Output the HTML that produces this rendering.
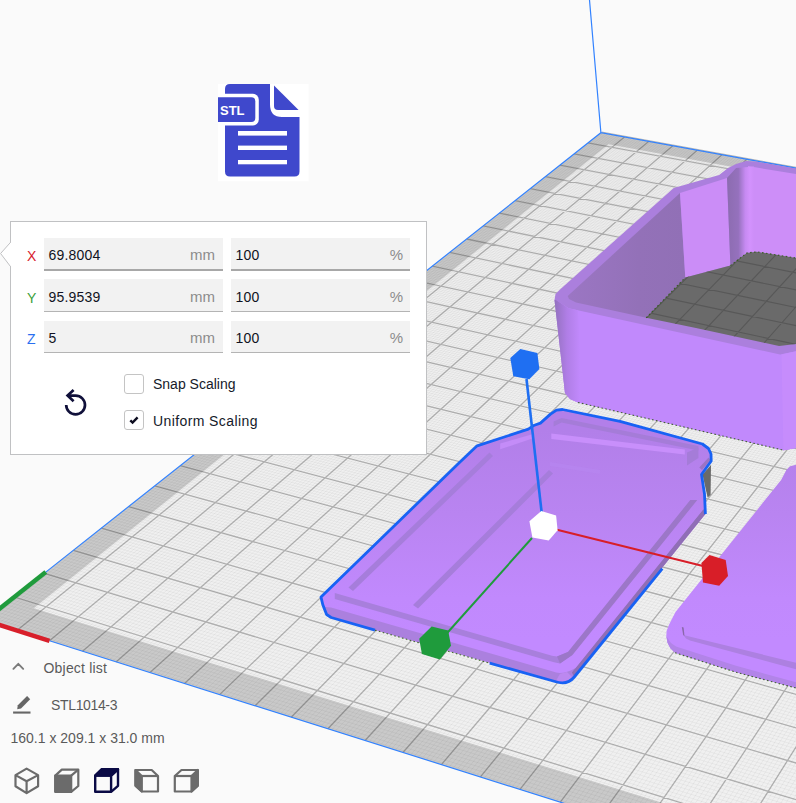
<!DOCTYPE html>
<html><head><meta charset="utf-8"><style>
html,body{margin:0;padding:0;}
body{width:796px;height:803px;overflow:hidden;background:#fafafa;position:relative;font-family:"Liberation Sans",sans-serif;}
.abs{position:absolute;}
svg.scene{position:absolute;left:0;top:0;}
.panel{position:absolute;left:10px;top:221px;width:415px;height:232px;background:#fff;border:1px solid #c0c1c3;}
.fld{position:absolute;width:179px;height:31px;background:#f2f2f2;border-bottom:1px solid #b4b4b4;}
.fld.act{height:31px;border-bottom:2px solid #a8a8a8;}
.val{position:absolute;left:4.5px;top:7px;font-size:14px;color:#101322;line-height:18px;letter-spacing:0.2px;}
.unit{position:absolute;right:8px;top:7px;font-size:15px;color:#8c8c8c;line-height:18px;}
.lab{position:absolute;font-size:14px;line-height:18px;}
.txt{position:absolute;font-size:14px;line-height:18px;white-space:nowrap;}
</style></head><body>
<svg class="scene" width="796" height="803" viewBox="0 0 796 803">
<polygon points="-15.2,620.4 1200.8,1004.5 1424.9,282.4 600.9,132.7" fill="#f0f0f0"/>
<path d="M-15.2,620.4 1200.8,1004.5 1424.9,282.4 600.9,132.7Z M33.9,608.2 1172.4,960.7 1397.1,289.1 608.6,144.3Z" fill="#000" fill-opacity="0.16" fill-rule="evenodd"/>
<path d="M-12.0,621.4L603.2,133.1M-8.8,622.4L605.6,133.6M-5.6,623.4L608.0,134.0M-2.4,624.5L610.4,134.4M0.8,625.5L612.7,134.9M4.0,626.5L615.1,135.3M7.2,627.5L617.5,135.7M10.5,628.5L619.9,136.2M13.7,629.5L622.2,136.6M20.1,631.6L627.0,137.5M23.4,632.6L629.4,137.9M26.6,633.6L631.8,138.3M29.9,634.6L634.2,138.8M33.1,635.7L636.6,139.2M36.4,636.7L639.0,139.6M39.7,637.7L641.4,140.1M42.9,638.8L643.8,140.5M46.2,639.8L646.2,140.9M52.7,641.9L651.0,141.8M56.0,642.9L653.4,142.2M59.3,643.9L655.8,142.7M62.6,645.0L658.3,143.1M65.9,646.0L660.7,143.6M69.2,647.1L663.1,144.0M72.5,648.1L665.5,144.4M75.9,649.2L667.9,144.9M79.2,650.2L670.4,145.3M85.8,652.3L675.2,146.2M89.2,653.4L677.7,146.7M92.5,654.4L680.1,147.1M95.8,655.5L682.5,147.5M99.2,656.5L685.0,148.0M102.5,657.6L687.4,148.4M105.9,658.7L689.9,148.9M109.3,659.7L692.3,149.3M112.6,660.8L694.8,149.8M119.4,662.9L699.7,150.7M122.8,664.0L702.1,151.1M126.2,665.1L704.6,151.5M129.6,666.1L707.1,152.0M133.0,667.2L709.5,152.4M136.4,668.3L712.0,152.9M139.8,669.4L714.5,153.3M143.2,670.4L716.9,153.8M146.6,671.5L719.4,154.2M153.5,673.7L724.4,155.1M156.9,674.8L726.8,155.6M160.3,675.8L729.3,156.0M163.8,676.9L731.8,156.5M167.2,678.0L734.3,156.9M170.7,679.1L736.8,157.4M174.1,680.2L739.3,157.8M177.6,681.3L741.8,158.3M181.1,682.4L744.3,158.8M188.0,684.6L749.3,159.7M191.5,685.7L751.8,160.1M195.0,686.8L754.3,160.6M198.5,687.9L756.8,161.0M202.0,689.0L759.3,161.5M205.5,690.1L761.8,161.9M209.0,691.2L764.3,162.4M212.5,692.3L766.9,162.9M216.0,693.4L769.4,163.3M223.1,695.7L774.4,164.2M226.6,696.8L777.0,164.7M230.2,697.9L779.5,165.2M233.7,699.0L782.0,165.6M237.3,700.2L784.6,166.1M240.9,701.3L787.1,166.5M244.4,702.4L789.7,167.0M248.0,703.5L792.2,167.5M251.6,704.7L794.7,167.9M258.7,706.9L799.8,168.8M262.3,708.1L802.4,169.3M265.9,709.2L805.0,169.8M269.5,710.3L807.5,170.2M273.1,711.5L810.1,170.7M276.7,712.6L812.6,171.2M280.4,713.8L815.2,171.6M284.0,714.9L817.8,172.1M287.6,716.0L820.3,172.6M294.9,718.3L825.5,173.5M298.5,719.5L828.1,174.0M302.2,720.7L830.7,174.4M305.8,721.8L833.2,174.9M309.5,723.0L835.8,175.4M313.2,724.1L838.4,175.9M316.9,725.3L841.0,176.3M320.5,726.4L843.6,176.8M324.2,727.6L846.2,177.3M331.6,729.9L851.4,178.2M335.3,731.1L854.0,178.7M339.0,732.3L856.6,179.2M342.7,733.5L859.2,179.6M346.5,734.6L861.8,180.1M350.2,735.8L864.4,180.6M353.9,737.0L867.1,181.1M357.6,738.2L869.7,181.5M361.4,739.3L872.3,182.0M368.9,741.7L877.5,183.0M372.7,742.9L880.2,183.4M376.4,744.1L882.8,183.9M380.2,745.3L885.4,184.4M384.0,746.5L888.1,184.9M387.8,747.7L890.7,185.4M391.5,748.9L893.4,185.8M395.3,750.1L896.0,186.3M399.1,751.3L898.6,186.8M406.8,753.7L904.0,187.8M410.6,754.9L906.6,188.2M414.4,756.1L909.3,188.7M418.2,757.3L911.9,189.2M422.1,758.5L914.6,189.7M425.9,759.7L917.3,190.2M429.8,760.9L919.9,190.7M433.6,762.2L922.6,191.1M437.5,763.4L925.3,191.6M445.2,765.8L930.6,192.6M449.1,767.1L933.3,193.1M453.0,768.3L936.0,193.6M456.9,769.5L938.7,194.1M460.8,770.7L941.4,194.6M464.7,772.0L944.1,195.0M468.6,773.2L946.8,195.5M472.5,774.4L949.5,196.0M476.4,775.7L952.2,196.5M484.3,778.2L957.6,197.5M488.2,779.4L960.3,198.0M492.2,780.7L963.0,198.5M496.1,781.9L965.7,199.0M500.1,783.2L968.4,199.5M504.1,784.4L971.1,200.0M508.0,785.7L973.9,200.5M512.0,786.9L976.6,201.0M516.0,788.2L979.3,201.4M524.0,790.7L984.8,202.4M528.0,792.0L987.5,202.9M532.0,793.2L990.2,203.4M536.0,794.5L993.0,203.9M540.1,795.8L995.7,204.4M544.1,797.1L998.5,204.9M548.1,798.3L1001.2,205.4M552.2,799.6L1004.0,205.9M556.2,800.9L1006.7,206.4M564.3,803.4L1012.2,207.4M568.4,804.7L1015.0,207.9M572.5,806.0L1017.8,208.4M576.6,807.3L1020.5,208.9M580.6,808.6L1023.3,209.4M584.7,809.9L1026.1,209.9M588.8,811.2L1028.9,210.5M593.0,812.5L1031.6,211.0M597.1,813.8L1034.4,211.5M605.3,816.4L1040.0,212.5M609.5,817.7L1042.8,213.0M613.6,819.0L1045.6,213.5M617.8,820.3L1048.4,214.0M621.9,821.6L1051.2,214.5M626.1,822.9L1054.0,215.0M630.2,824.3L1056.8,215.5M634.4,825.6L1059.6,216.0M638.6,826.9L1062.4,216.5M647.0,829.6L1068.0,217.6M651.2,830.9L1070.9,218.1M655.4,832.2L1073.7,218.6M659.6,833.5L1076.5,219.1M663.8,834.9L1079.3,219.6M668.1,836.2L1082.2,220.1M672.3,837.6L1085.0,220.6M676.6,838.9L1087.8,221.2M680.8,840.2L1090.7,221.7M689.3,842.9L1096.4,222.7M693.6,844.3L1099.2,223.2M697.9,845.6L1102.1,223.7M702.2,847.0L1104.9,224.3M706.5,848.3L1107.8,224.8M710.8,849.7L1110.6,225.3M715.1,851.1L1113.5,225.8M719.4,852.4L1116.4,226.3M723.7,853.8L1119.2,226.9M732.4,856.5L1125.0,227.9M736.7,857.9L1127.9,228.4M741.1,859.3L1130.7,229.0M745.5,860.6L1133.6,229.5M749.8,862.0L1136.5,230.0M754.2,863.4L1139.4,230.5M758.6,864.8L1142.3,231.1M763.0,866.2L1145.2,231.6M767.4,867.6L1148.1,232.1M776.2,870.4L1153.9,233.2M780.6,871.7L1156.8,233.7M785.0,873.1L1159.7,234.2M789.5,874.5L1162.6,234.8M793.9,875.9L1165.5,235.3M798.3,877.4L1168.5,235.8M802.8,878.8L1171.4,236.3M807.3,880.2L1174.3,236.9M811.7,881.6L1177.2,237.4M820.7,884.4L1183.1,238.5M825.2,885.8L1186.0,239.0M829.7,887.3L1189.0,239.5M834.2,888.7L1191.9,240.1M838.7,890.1L1194.9,240.6M843.2,891.5L1197.8,241.1M847.8,893.0L1200.8,241.7M852.3,894.4L1203.7,242.2M856.9,895.8L1206.7,242.8M866.0,898.7L1212.6,243.8M870.5,900.2L1215.6,244.4M875.1,901.6L1218.6,244.9M879.7,903.1L1221.5,245.5M884.3,904.5L1224.5,246.0M888.9,906.0L1227.5,246.5M893.5,907.4L1230.5,247.1M898.1,908.9L1233.5,247.6M902.8,910.3L1236.4,248.2M912.0,913.3L1242.4,249.2M916.7,914.7L1245.4,249.8M921.3,916.2L1248.4,250.3M926.0,917.7L1251.4,250.9M930.7,919.2L1254.5,251.4M935.4,920.6L1257.5,252.0M940.0,922.1L1260.5,252.5M944.7,923.6L1263.5,253.1M949.5,925.1L1266.5,253.6M958.9,928.1L1272.6,254.7M963.6,929.6L1275.6,255.3M968.4,931.1L1278.6,255.8M973.1,932.6L1281.7,256.4M977.9,934.1L1284.7,256.9M982.6,935.6L1287.8,257.5M987.4,937.1L1290.8,258.0M992.2,938.6L1293.9,258.6M997.0,940.1L1296.9,259.1M1006.6,943.1L1303.0,260.3M1011.4,944.6L1306.1,260.8M1016.2,946.2L1309.2,261.4M1021.0,947.7L1312.2,261.9M1025.9,949.2L1315.3,262.5M1030.7,950.7L1318.4,263.0M1035.6,952.3L1321.5,263.6M1040.4,953.8L1324.5,264.2M1045.3,955.4L1327.6,264.7M1055.1,958.4L1333.8,265.8M1060.0,960.0L1336.9,266.4M1064.9,961.5L1340.0,267.0M1069.8,963.1L1343.1,267.5M1074.7,964.7L1346.2,268.1M1079.7,966.2L1349.3,268.7M1084.6,967.8L1352.4,269.2M1089.6,969.3L1355.5,269.8M1094.5,970.9L1358.7,270.4M1104.5,974.0L1364.9,271.5M1109.5,975.6L1368.0,272.1M1114.5,977.2L1371.2,272.6M1119.5,978.8L1374.3,273.2M1124.5,980.4L1377.5,273.8M1129.5,981.9L1380.6,274.3M1134.5,983.5L1383.7,274.9M1139.6,985.1L1386.9,275.5M1144.6,986.7L1390.0,276.1M1154.8,989.9L1396.4,277.2M1159.8,991.5L1399.5,277.8M1164.9,993.1L1402.7,278.4M1170.0,994.7L1405.9,278.9M1175.1,996.4L1409.0,279.5M1180.2,998.0L1412.2,280.1M1185.4,999.6L1415.4,280.7M1190.5,1001.2L1418.6,281.2M1195.6,1002.8L1421.8,281.8M-13.6,619.2L1201.4,1002.4M-10.5,616.7L1202.7,998.4M-7.3,614.2L1203.9,994.4M-4.2,611.7L1205.2,990.4M-1.1,609.2L1206.4,986.4M2.0,606.8L1207.6,982.4M5.1,604.3L1208.8,978.5M8.2,601.9L1210.1,974.6M11.3,599.5L1211.3,970.6M17.4,594.6L1213.7,962.9M20.4,592.2L1214.9,959.0M23.5,589.8L1216.1,955.2M26.5,587.4L1217.3,951.4M29.5,585.1L1218.5,947.5M32.5,582.7L1219.6,943.8M35.5,580.3L1220.8,940.0M38.4,578.0L1222.0,936.2M41.4,575.6L1223.1,932.5M47.3,570.9L1225.4,925.0M50.3,568.6L1226.6,921.3M53.2,566.3L1227.7,917.7M56.1,564.0L1228.9,914.0M59.0,561.7L1230.0,910.4M61.9,559.4L1231.1,906.7M64.8,557.1L1232.2,903.1M67.7,554.8L1233.4,899.5M70.5,552.6L1234.5,895.9M76.2,548.1L1236.7,888.8M79.1,545.8L1237.8,885.3M81.9,543.6L1238.9,881.7M84.7,541.3L1240.0,878.2M87.5,539.1L1241.1,874.7M90.3,536.9L1242.1,871.3M93.1,534.7L1243.2,867.8M95.9,532.5L1244.3,864.3M98.7,530.3L1245.4,860.9M104.2,525.9L1247.5,854.1M106.9,523.8L1248.5,850.7M109.7,521.6L1249.6,847.3M112.4,519.4L1250.6,843.9M115.1,517.3L1251.7,840.6M117.8,515.1L1252.7,837.3M120.5,513.0L1253.7,833.9M123.2,510.9L1254.8,830.6M125.9,508.7L1255.8,827.3M131.2,504.5L1257.8,820.8M133.9,502.4L1258.8,817.5M136.5,500.3L1259.8,814.3M139.1,498.2L1260.8,811.0M141.8,496.2L1261.8,807.8M144.4,494.1L1262.8,804.6M147.0,492.0L1263.8,801.4M149.6,490.0L1264.8,798.2M152.2,487.9L1265.8,795.1M157.4,483.8L1267.7,788.8M159.9,481.8L1268.7,785.7M162.5,479.8L1269.7,782.5M165.1,477.7L1270.6,779.4M167.6,475.7L1271.6,776.4M170.1,473.7L1272.6,773.3M172.7,471.7L1273.5,770.2M175.2,469.7L1274.5,767.2M177.7,467.7L1275.4,764.1M182.7,463.8L1277.3,758.1M185.2,461.8L1278.2,755.1M187.7,459.8L1279.1,752.1M190.2,457.9L1280.1,749.1M192.6,455.9L1281.0,746.1M195.1,454.0L1281.9,743.1M197.5,452.0L1282.8,740.2M200.0,450.1L1283.7,737.3M202.4,448.2L1284.6,734.3M207.2,444.3L1286.5,728.5M209.7,442.4L1287.4,725.6M212.1,440.5L1288.2,722.7M214.5,438.6L1289.1,719.9M216.9,436.7L1290.0,717.0M219.2,434.8L1290.9,714.2M221.6,433.0L1291.8,711.3M224.0,431.1L1292.7,708.5M226.3,429.2L1293.5,705.7M231.0,425.5L1295.3,700.1M233.4,423.6L1296.1,697.3M235.7,421.8L1297.0,694.5M238.0,420.0L1297.9,691.8M240.3,418.1L1298.7,689.0M242.7,416.3L1299.6,686.3M245.0,414.5L1300.4,683.5M247.3,412.7L1301.3,680.8M249.5,410.8L1302.1,678.1M254.1,407.2L1303.8,672.7M256.4,405.4L1304.6,670.0M258.6,403.6L1305.4,667.3M260.9,401.9L1306.3,664.7M263.1,400.1L1307.1,662.0M265.4,398.3L1307.9,659.4M267.6,396.5L1308.7,656.7M269.8,394.8L1309.5,654.1M272.1,393.0L1310.4,651.5M276.5,389.5L1312.0,646.3M278.7,387.8L1312.8,643.7M280.9,386.0L1313.6,641.1M283.1,384.3L1314.4,638.6M285.3,382.6L1315.2,636.0M287.4,380.9L1316.0,633.5M289.6,379.1L1316.8,630.9M291.8,377.4L1317.5,628.4M293.9,375.7L1318.3,625.9M298.2,372.3L1319.9,620.9M300.3,370.6L1320.7,618.4M302.5,368.9L1321.4,615.9M304.6,367.3L1322.2,613.4M306.7,365.6L1323.0,610.9M308.8,363.9L1323.7,608.5M310.9,362.2L1324.5,606.0M313.0,360.6L1325.2,603.6M315.1,358.9L1326.0,601.1M319.3,355.6L1327.5,596.3M321.4,354.0L1328.2,593.9M323.4,352.3L1329.0,591.5M325.5,350.7L1329.7,589.1M327.6,349.1L1330.5,586.7M329.6,347.5L1331.2,584.3M331.7,345.8L1331.9,582.0M333.7,344.2L1332.7,579.6M335.7,342.6L1333.4,577.3M339.8,339.4L1334.9,572.6M341.8,337.8L1335.6,570.3M343.8,336.2L1336.3,567.9M345.8,334.6L1337.0,565.6M347.8,333.0L1337.7,563.3M349.8,331.5L1338.4,561.0M351.8,329.9L1339.2,558.7M353.8,328.3L1339.9,556.5M355.8,326.8L1340.6,554.2M359.7,323.6L1342.0,549.7M361.7,322.1L1342.7,547.4M363.6,320.5L1343.4,545.2M365.6,319.0L1344.1,543.0M367.5,317.5L1344.8,540.7M369.5,315.9L1345.4,538.5M371.4,314.4L1346.1,536.3M373.3,312.9L1346.8,534.1M375.2,311.3L1347.5,531.9M379.1,308.3L1348.8,527.5M381.0,306.8L1349.5,525.4M382.9,305.3L1350.2,523.2M384.8,303.8L1350.9,521.0M386.7,302.3L1351.5,518.9M388.5,300.8L1352.2,516.7M390.4,299.3L1352.9,514.6M392.3,297.8L1353.5,512.5M394.2,296.3L1354.2,510.3M397.9,293.4L1355.5,506.1M399.8,291.9L1356.2,504.0M401.6,290.5L1356.8,501.9M403.5,289.0L1357.5,499.8M405.3,287.5L1358.1,497.7M407.1,286.1L1358.7,495.7M409.0,284.6L1359.4,493.6M410.8,283.2L1360.0,491.5M412.6,281.8L1360.7,489.5M416.2,278.9L1361.9,485.4M418.0,277.5L1362.6,483.3M419.8,276.0L1363.2,481.3M421.6,274.6L1363.8,479.3M423.4,273.2L1364.5,477.3M425.2,271.8L1365.1,475.3M427.0,270.4L1365.7,473.3M428.8,269.0L1366.3,471.3M430.5,267.6L1366.9,469.3M434.1,264.8L1368.2,465.3M435.8,263.4L1368.8,463.3M437.6,262.0L1369.4,461.4M439.3,260.6L1370.0,459.4M441.1,259.2L1370.6,457.4M442.8,257.9L1371.2,455.5M444.5,256.5L1371.8,453.6M446.3,255.1L1372.4,451.6M448.0,253.7L1373.0,449.7M451.4,251.0L1374.2,445.9M453.1,249.7L1374.8,443.9M454.8,248.3L1375.4,442.0M456.5,247.0L1376.0,440.1M458.2,245.6L1376.6,438.2M459.9,244.3L1377.2,436.4M461.6,242.9L1377.7,434.5M463.3,241.6L1378.3,432.6M465.0,240.3L1378.9,430.7M468.3,237.6L1380.1,427.0M470.0,236.3L1380.6,425.2M471.7,235.0L1381.2,423.3M473.3,233.7L1381.8,421.5M475.0,232.4L1382.3,419.6M476.6,231.1L1382.9,417.8M478.3,229.8L1383.5,416.0M479.9,228.5L1384.0,414.1M481.6,227.2L1384.6,412.3M484.8,224.6L1385.7,408.7M486.4,223.3L1386.3,406.9M488.1,222.0L1386.8,405.1M489.7,220.7L1387.4,403.3M491.3,219.5L1388.0,401.6M492.9,218.2L1388.5,399.8M494.5,216.9L1389.1,398.0M496.1,215.6L1389.6,396.3M497.7,214.4L1390.1,394.5M500.9,211.9L1391.2,391.0M502.5,210.6L1391.8,389.2M504.1,209.4L1392.3,387.5M505.6,208.1L1392.9,385.8M507.2,206.9L1393.4,384.0M508.8,205.6L1393.9,382.3M510.3,204.4L1394.5,380.6M511.9,203.2L1395.0,378.9M513.5,201.9L1395.5,377.2M516.6,199.5L1396.6,373.8M518.1,198.2L1397.1,372.1M519.6,197.0L1397.6,370.4M521.2,195.8L1398.2,368.7M522.7,194.6L1398.7,367.0M524.2,193.4L1399.2,365.4M525.8,192.2L1399.7,363.7M527.3,191.0L1400.2,362.0M528.8,189.8L1400.7,360.4M531.8,187.4L1401.8,357.1M533.3,186.2L1402.3,355.4M534.8,185.0L1402.8,353.8M536.3,183.8L1403.3,352.1M537.8,182.6L1403.8,350.5M539.3,181.4L1404.3,348.9M540.8,180.3L1404.8,347.3M542.3,179.1L1405.3,345.6M543.8,177.9L1405.8,344.0M546.7,175.6L1406.8,340.8M548.2,174.4L1407.3,339.2M549.7,173.2L1407.8,337.6M551.1,172.1L1408.3,336.0M552.6,170.9L1408.8,334.5M554.1,169.8L1409.3,332.9M555.5,168.6L1409.8,331.3M557.0,167.5L1410.3,329.7M558.4,166.3L1410.7,328.2M561.3,164.1L1411.7,325.0M562.7,162.9L1412.2,323.5M564.2,161.8L1412.7,321.9M565.6,160.7L1413.2,320.4M567.0,159.5L1413.6,318.9M568.4,158.4L1414.1,317.3M569.8,157.3L1414.6,315.8M571.3,156.2L1415.1,314.3M572.7,155.0L1415.5,312.7M575.5,152.8L1416.5,309.7M576.9,151.7L1416.9,308.2M578.3,150.6L1417.4,306.7M579.7,149.5L1417.9,305.2M581.1,148.4L1418.3,303.7M582.5,147.3L1418.8,302.2M583.8,146.2L1419.3,300.7M585.2,145.1L1419.7,299.2M586.6,144.0L1420.2,297.7M589.4,141.8L1421.1,294.8M590.7,140.8L1421.6,293.3M592.1,139.7L1422.0,291.8M593.4,138.6L1422.5,290.4M594.8,137.5L1422.9,288.9M596.2,136.4L1423.4,287.5M597.5,135.4L1423.8,286.0M598.9,134.3L1424.3,284.6M600.2,133.2L1424.7,283.1" stroke="#000" stroke-opacity="0.07" stroke-width="0.6" fill="none"/>
<path d="M16.9,630.6L624.6,137.0M49.5,640.8L648.6,141.4M82.5,651.3L672.8,145.8M116.0,661.9L697.2,150.2M150.0,672.6L721.9,154.7M184.5,683.5L746.8,159.2M219.6,694.6L771.9,163.8M255.1,705.8L797.3,168.4M291.2,717.2L822.9,173.0M327.9,728.8L848.8,177.7M365.1,740.5L874.9,182.5M402.9,752.5L901.3,187.3M441.4,764.6L927.9,192.1M480.4,776.9L954.9,197.0M520.0,789.4L982.0,201.9M560.3,802.2L1009.5,206.9M601.2,815.1L1037.2,212.0M642.8,828.2L1065.2,217.1M685.1,841.6L1093.5,222.2M728.1,855.2L1122.1,227.4M771.8,869.0L1151.0,232.6M816.2,883.0L1180.2,237.9M861.4,897.3L1209.6,243.3M907.4,911.8L1239.4,248.7M954.2,926.6L1269.5,254.2M1001.8,941.6L1300.0,259.7M1050.2,956.9L1330.7,265.3M1099.5,972.5L1361.8,270.9M1149.7,988.3L1393.2,276.6M14.3,597.0L1212.5,966.8M44.4,573.3L1224.3,928.7M73.4,550.3L1235.6,892.4M101.4,528.1L1246.4,857.5M128.5,506.6L1256.8,824.0M154.8,485.9L1266.8,791.9M180.2,465.7L1276.3,761.1M204.8,446.2L1285.6,731.4M228.7,427.4L1294.4,702.9M251.8,409.0L1302.9,675.4M274.3,391.3L1311.2,648.9M296.1,374.0L1319.1,623.4M317.2,357.3L1326.8,598.7M337.8,341.0L1334.1,574.9M357.7,325.2L1341.3,551.9M377.2,309.8L1348.2,529.7M396.0,294.9L1354.8,508.2M414.4,280.3L1361.3,487.4M432.3,266.2L1367.6,467.3M449.7,252.4L1373.6,447.8M466.7,239.0L1379.5,428.9M483.2,225.9L1385.2,410.5M499.3,213.1L1390.7,392.7M515.0,200.7L1396.1,375.5M530.3,188.6L1401.3,358.7M545.3,176.7L1406.3,342.4M559.8,165.2L1411.2,326.6M574.1,153.9L1416.0,311.2M588.0,142.9L1420.7,296.2M601.6,132.2L1425.2,281.7" stroke="#000" stroke-opacity="0.27" stroke-width="1.3" fill="none"/>
<path d="M45.8,572.1L600.9,132.7L1424.9,282.4 M49.5,640.8L1200.8,1004.5 M600.9,132.7L589.5,0" stroke="#3282ff" stroke-width="1.2" fill="none"/>
<path d="M-15.2,620.4L45.8,572.1" stroke="#1f9b3c" stroke-width="4.5" fill="none"/>
<path d="M-15.2,620.4L49.5,640.8" stroke="#d81f2a" stroke-width="4.5" fill="none"/>
<polygon points="554.5,300 555.5,294 560,289.5 673.7,188 676.4,187.2 719.1,175.1 728.1,168.1 736.1,164.1 746.2,161.1 756.2,161.6 796,168.6 796,448 787.9,449.5 783.4,450.2 686,427.5 578,402.5 570,399 565,393" fill="#ab7fdd" />
<linearGradient id="gcorner" x1="554" y1="0" x2="580" y2="0" gradientUnits="userSpaceOnUse"><stop offset="0" stop-color="#9270bd"/><stop offset="0.5" stop-color="#b07ee6"/><stop offset="1" stop-color="#c189fc"/></linearGradient>
<polygon points="556,300 568.6,308.3 780.1,354.5 796,351.3 796,448 787.9,449.5 783.4,450.2 578,402.5 570,399 565,393" fill="#c189fc" />
<polygon points="554.5,300 556,300 568.6,308.3 578,310.3 583,403.7 578,402.5 570,399 565,393" fill="url(#gcorner)" />
<polygon points="781.5,354.5 796,351.3 796,448 787.9,449.5 783.4,450.2" fill="#c68cfc" />
<linearGradient id="gleft" x1="570" y1="0" x2="685" y2="0" gradientUnits="userSpaceOnUse"><stop offset="0" stop-color="#9b76c3"/><stop offset="0.6" stop-color="#9371b8"/><stop offset="1" stop-color="#9170b6"/></linearGradient>
<polygon points="567.7,296 680,193 685.3,277.5 646.2,317.8 576,302.6 569,299" fill="url(#gleft)" />
<polygon points="680,193 727,178.1 730.4,265.6 685.3,277.5" fill="#cb8df7" />
<polygon points="748,166.1 796,174.1 796,258 750,252" fill="#cd8ef8" />
<linearGradient id="gstrip" x1="727" y1="0" x2="754" y2="0" gradientUnits="userSpaceOnUse"><stop offset="0" stop-color="#8c6cb0"/><stop offset="0.42" stop-color="#9571bd"/><stop offset="0.68" stop-color="#c68af2"/><stop offset="0.85" stop-color="#d392fd"/><stop offset="1" stop-color="#cd8ef8"/></linearGradient>
<polygon points="727,178.1 736.1,168.1 754,166.5 755,251.8 746.8,253 730.4,265.6" fill="url(#gstrip)" />
<polygon points="646.2,317.8 685.3,277.5 730.4,265.6 746.8,253 756.8,251.8 796,258 796,344 779.1,346 696,328" fill="#6a6a6a" />
<linearGradient id="gtop3" x1="0" y1="430" x2="0" y2="640" gradientUnits="userSpaceOnUse"><stop offset="0" stop-color="#b27fe9"/><stop offset="0.4" stop-color="#b984f1"/><stop offset="0.8" stop-color="#c189fd"/><stop offset="1" stop-color="#c28aff"/></linearGradient>
<polygon points="796,464.8 790,466.3 786.5,469.8 781.1,480 675.5,612 669,624.7 666.6,631 666.3,636 667.5,642.7 670.5,648.5 675.1,652.7 736,672.3 796,688" fill="url(#gtop3)" />
<polygon points="666.3,636 667.5,638 671,643 676,646.5 736,665.7 796,682.3 796,688 736,672.3 675.1,652.7 670.5,648.5 667.5,642.7 666.3,636" fill="#b284e8" />
<polygon points="683.2,635.1 796,662.7 796,669.2 690,640.5 686,638.5" fill="#ad80e1" />
<polygon points="681.8,627 683.6,627.5 684.5,636 683.2,635.1" fill="#8a68aa" />
<clipPath id="cfloor"><polygon points="646.2,317.8 685.3,277.5 730.4,265.6 746.8,253 756.8,251.8 796,258 796,344 779.1,346 696,328"/></clipPath>
<path d="M16.9,630.6L624.6,137.0M49.5,640.8L648.6,141.4M82.5,651.3L672.8,145.8M116.0,661.9L697.2,150.2M150.0,672.6L721.9,154.7M184.5,683.5L746.8,159.2M219.6,694.6L771.9,163.8M255.1,705.8L797.3,168.4M291.2,717.2L822.9,173.0M327.9,728.8L848.8,177.7M365.1,740.5L874.9,182.5M402.9,752.5L901.3,187.3M441.4,764.6L927.9,192.1M480.4,776.9L954.9,197.0M520.0,789.4L982.0,201.9M560.3,802.2L1009.5,206.9M601.2,815.1L1037.2,212.0M642.8,828.2L1065.2,217.1M685.1,841.6L1093.5,222.2M728.1,855.2L1122.1,227.4M771.8,869.0L1151.0,232.6M816.2,883.0L1180.2,237.9M861.4,897.3L1209.6,243.3M907.4,911.8L1239.4,248.7M954.2,926.6L1269.5,254.2M1001.8,941.6L1300.0,259.7M1050.2,956.9L1330.7,265.3M1099.5,972.5L1361.8,270.9M1149.7,988.3L1393.2,276.6M14.3,597.0L1212.5,966.8M44.4,573.3L1224.3,928.7M73.4,550.3L1235.6,892.4M101.4,528.1L1246.4,857.5M128.5,506.6L1256.8,824.0M154.8,485.9L1266.8,791.9M180.2,465.7L1276.3,761.1M204.8,446.2L1285.6,731.4M228.7,427.4L1294.4,702.9M251.8,409.0L1302.9,675.4M274.3,391.3L1311.2,648.9M296.1,374.0L1319.1,623.4M317.2,357.3L1326.8,598.7M337.8,341.0L1334.1,574.9M357.7,325.2L1341.3,551.9M377.2,309.8L1348.2,529.7M396.0,294.9L1354.8,508.2M414.4,280.3L1361.3,487.4M432.3,266.2L1367.6,467.3M449.7,252.4L1373.6,447.8M466.7,239.0L1379.5,428.9M483.2,225.9L1385.2,410.5M499.3,213.1L1390.7,392.7M515.0,200.7L1396.1,375.5M530.3,188.6L1401.3,358.7M545.3,176.7L1406.3,342.4M559.8,165.2L1411.2,326.6M574.1,153.9L1416.0,311.2M588.0,142.9L1420.7,296.2M601.6,132.2L1425.2,281.7" stroke="#585858" stroke-width="1.1" fill="none" clip-path="url(#cfloor)"/>
<linearGradient id="gtop" x1="0" y1="430" x2="0" y2="640" gradientUnits="userSpaceOnUse"><stop offset="0" stop-color="#b27fe9"/><stop offset="0.4" stop-color="#b984f1"/><stop offset="0.8" stop-color="#c189fd"/><stop offset="1" stop-color="#c28aff"/></linearGradient>
<polygon points="321,597.1 459.5,462.4 477.1,445.8 528.3,429.2 534.4,425.2 540.4,423.1 550.5,414.1 556.5,410.1 562.5,409.5 620,421.4 702.4,444 708.5,448.5 711,454 711.2,461 701.5,474.5 704.5,494 706,513.5 705.4,514.1 636.2505,600 574.2655,677 571.7954861111111,679.5137541666668 569.0291111111111,681.3216833333333 565.966375,682.4237875 562.6072777777779,682.8200666666667 558.9518194444445,682.5105208333333 555,681.49515 331.1,617.5 326.6,614.5 322.8,604.7" fill="#ab80de" />
<polygon points="705.4,514.1 574.2655,677 571.888,672.5 703.5055,509" fill="#906eb6" />
<polygon points="321,597.1 459.5,462.4 477.1,445.8 528.3,429.2 534.4,425.2 540.4,423.1 550.5,414.1 556.5,410.1 562.5,409.5 620,421.4 702.4,444 708.5,448.5 711,454 711.2,461 701.5,474.5 704.5,494 706,513.5 703.5055,509 575.5105,668 571.215625,670.2063930555555 567.1379999999999,671.7581055555555 563.277625,672.6551374999999 559.6345,672.8974888888888 556.2086250000001,672.4851597222222 553,671.41815 331.1,607.4 325,606.9 322.8,604" fill="url(#gtop)" />
<polygon points="556,680.78365 563,683.5 568,681 572,677 567,672 560,673.7376499999999" fill="#c08af4" opacity="0.8"/>
<polygon points="334.8,598.96745 554,662.20665 560,663.43765 571.9755,655 567.8905,652 557,656.57215 552,655.62965 334.8,592.96745" fill="#a87fdc" />
<polygon points="572.4755,655 697.2505,500 690.2505,500 567.8905,652 557,656.57215 560,663.43765" fill="#9c77c8" />
<polygon points="348.5,587.5 489.5,452.5 493,456 353,591" fill="#a67ddb" />
<polygon points="413,605 549,470 553,473.5 418,608.5" fill="#a67ddb" />
<polygon points="500.2,443.5 532.4,434.2 533,438.3 500.2,449.3" fill="#c48cf8" />
<polygon points="553.6,421.5 561.5,418.1 698.4,446.0 698.4,450.5 561.5,422.6 553.6,426.5" fill="#a57cd8" />
<polygon points="687,452.5 698.4,447.5 698.4,458 687,465.6" fill="#a57cd8" />
<polygon points="551.3,433.5 684.8,449.5 684.8,454.5 551.3,439" fill="#c88ffb" />
<polygon points="550,462 600,470 600,474 550,466" fill="#b887f2" opacity="0.5"/>
<polygon points="711,465 702.5,474.5 707.6,497.5 710.6,495" fill="#6a6a6a" />
<polygon points="699.3,467.4 708.6,457.4 710.6,460 702,470" fill="#9470bb" opacity="0.8"/>
<path d="M459.5,462.4 L321,597.1 L322.8,604.7 L326.6,614.5 L331.1,617.5 L375,630.2 M489.7,663.2 L555,681.5 Q567.3,685.6 574.3,677 L662.3,568.6 M705.4,514.1 L704.5,494 L701.5,474.5 L711.2,461 L711,454 L708.5,448.5 L702.4,444 L620,421.4 L562.5,409.5 L556.5,410.1 L550.5,414.1 L540.4,423.1 L534.4,425.2 L528.3,429.2 L477.1,445.8 L459.5,462.4" fill="none" stroke="#1862f4" stroke-width="2.8" stroke-linejoin="round"/>
<path d="M578,402.5 L686,427.5 L783.4,450.2 M675.1,652.7 L736,672.3 L796,688 M375,630.2 L489.7,663.2 M646.2,317.8 L685.3,277.5 M730.4,265.6 L746.8,253 L756.8,251.8 L796,258" fill="none" stroke="#2d5a12" stroke-width="1.1" stroke-dasharray="1.6,2.4" opacity="0.85"/>
<path d="M526.5,379 L542.5,520" stroke="#1f6ff2" stroke-width="2.6" fill="none"/>
<path d="M556,529.5 L705,566.5" stroke="#d81e28" stroke-width="2.1" fill="none"/>
<path d="M532,538 L440,641" stroke="#1f9b3c" stroke-width="2" fill="none"/>
<polygon points="520.3,349 537.4,353 539.4,369.1 529.3,379.2 513.3,376.2 510.3,358.1" fill="#1f6ff2" />
<polygon points="541.3,511.0 556.1,515.4 557.6,530.3 548.7,540.6 532.4,537.6 529.4,521.3" fill="#ffffff" />
<polygon points="709.5,555 725.7,559.9 728,576.1 719.2,585.8 703,582.6 701.4,563.1" fill="#d81e28" />
<polygon points="431.6,626.4 448.2,630.6 451,645.8 439.9,659.6 421.9,654 419.2,638.8" fill="#1f9b3c" />
</svg>
<div class="panel"></div>
<svg class="abs" style="left:0;top:240px" width="12" height="30" viewBox="0 0 12 30"><path d="M11,1.8 L0.6,13.5 L11,27.2" fill="#fff" stroke="#c0c1c3" stroke-width="1"/><rect x="11" y="0" width="2" height="30" fill="#fff"/></svg>
<div class="lab" style="left:27px;top:247px;color:#d8202c">X</div>
<div class="lab" style="left:27px;top:288.5px;color:#3aa03a">Y</div>
<div class="lab" style="left:27px;top:330px;color:#2a6ff0">Z</div>
<div class="fld act" style="left:44px;top:238px"><span class="val" style="top:8px">69.8004</span><span class="unit" style="top:8px">mm</span></div>
<div class="fld act" style="left:231px;top:238px"><span class="val" style="top:8px">100</span><span class="unit" style="top:8px;right:7px">%</span></div>
<div class="fld" style="left:44px;top:279px;height:32px"><span class="val" style="top:8.5px">95.9539</span><span class="unit" style="top:8.5px">mm</span></div>
<div class="fld" style="left:231px;top:279px;height:32px"><span class="val" style="top:8.5px">100</span><span class="unit" style="top:8.5px;right:7px">%</span></div>
<div class="fld" style="left:44px;top:321px;height:31px"><span class="val" style="top:8px">5</span><span class="unit" style="top:8px">mm</span></div>
<div class="fld" style="left:231px;top:321px;height:31px"><span class="val" style="top:8px">100</span><span class="unit" style="top:8px;right:7px">%</span></div>
<svg class="abs" style="left:60px;top:386px" width="32" height="34" viewBox="0 0 32 34">
<path d="M6.2,19 A9.4,9.4 0 1 0 15.6,9.6 L8,9.6" fill="none" stroke="#10103a" stroke-width="2.7"/>
<path d="M13.6,4 L7.6,9.6 L13.6,15.2" fill="none" stroke="#10103a" stroke-width="2.7" stroke-linejoin="miter"/>
</svg>
<div class="abs" style="left:124px;top:374px;width:18px;height:18px;border:1px solid #c4c4c4;border-radius:3px;background:#fff"></div>
<div class="abs" style="left:124px;top:410px;width:18px;height:18px;border:1px solid #c4c4c4;border-radius:3px;background:#fff"></div>
<svg class="abs" style="left:124px;top:410px" width="20" height="20" viewBox="0 0 20 20"><path d="M6.3,10.3 L8.6,12.6 L13.6,7.4" fill="none" stroke="#0d0d20" stroke-width="2.4"/></svg>
<div class="txt" style="left:153px;top:375px;color:#151a2a">Snap Scaling</div>
<div class="txt" style="left:153px;top:412px;color:#151a2a;letter-spacing:0.4px">Uniform Scaling</div>
<svg class="abs" style="left:0;top:655px" width="40" height="70" viewBox="0 0 40 70">
<path d="M13.4,13.8 L18.3,8.8 L23.2,13.8" fill="none" stroke="#7a7a7a" stroke-width="1.9" stroke-linecap="round" stroke-linejoin="round"/>
<polygon points="17.2,54.2 17.8,50.3 27.1,41.1 30.2,44.2 21,53.5" fill="#666"/>
<rect x="13.1" y="56.5" width="17.4" height="2.1" fill="#666"/>
</svg>
<div class="txt" style="left:43.5px;top:659px;color:#5a5a5a;letter-spacing:0.2px">Object list</div>
<div class="txt" style="left:51px;top:696px;color:#5a5a5a;letter-spacing:-0.35px">STL1014-3</div>
<div class="txt" style="left:10.5px;top:729px;color:#5a5a5a">160.1 x 209.1 x 31.0 mm</div>
<svg class="abs" style="left:0;top:760px" width="210" height="43" viewBox="0 760 210 43">
<g fill="none" stroke="#6b6b6b" stroke-width="2.2" stroke-linejoin="round">
<path d="M26.6,768.6 L38.1,775.1 L38.1,786.2 L26.6,793.1 L15.5,786.2 L15.5,775.1 Z M15.5,775.1 L26.6,781.3 L38.1,775.1 M26.6,781.3 L26.6,793.1"/>
</g>
<g fill="#6b6b6b" stroke="#6b6b6b" stroke-width="2.2" stroke-linejoin="round">
<path d="M55.3,775.6 L61.8,769.6 L78.3,769.6 L78.3,786 L71.2,791.8 L55.3,791.8 Z" fill="none"/>
<rect x="55.3" y="775.6" width="15.9" height="16.2"/>
<path d="M71.2,775.6 L78.3,769.6" fill="none"/>
</g>
<g fill="#0a0a45" stroke="#0a0a45" stroke-width="2.4" stroke-linejoin="round">
<path d="M95.2,775.6 L101.7,769.3 L118,769.3 L118,785.8 L111.1,791.8 L95.2,791.8 Z" fill="none"/>
<path d="M95.2,775.6 L101.7,769.3 L118,769.3 L111.1,775.6 Z"/>
<path d="M95.2,775.6 L111.1,775.6 L111.1,791.8 M111.1,775.6 L118,769.3" fill="none"/>
</g>
<g fill="#6b6b6b" stroke="#6b6b6b" stroke-width="2.2" stroke-linejoin="round">
<path d="M135.5,770 L151.7,770 L158,776 L158,791.5 L141.8,791.5 L135.5,785.6 Z" fill="none"/>
<path d="M135.5,770 L141.8,776 L141.8,791.5 L135.5,785.6 Z"/>
<path d="M141.8,776 L158,776" fill="none"/>
</g>
<g fill="#6b6b6b" stroke="#6b6b6b" stroke-width="2.2" stroke-linejoin="round">
<path d="M174.8,776 L181.5,770 L197.8,770 L197.8,785.6 L191.5,791.5 L174.8,791.5 Z" fill="none"/>
<path d="M191.5,776 L197.8,770 L197.8,785.6 L191.5,791.5 Z"/>
<path d="M174.8,776 L191.5,776" fill="none"/>
</g>
</svg>
<svg class="abs" style="left:218px;top:84px" width="91" height="98" viewBox="218 84 91 98">
<rect x="218" y="84" width="90.6" height="97.3" fill="#fff"/>
<path d="M230,84 L270,84 L270,104.5 Q270,117 282,117 L299.5,117 L299.5,171.6 Q299.5,176.6 294.5,176.6 L230,176.6 Q225,176.6 225,171.6 L225,89 Q225,84 230,84 Z" fill="#3f48cc"/>
<path d="M274,85.5 L298.6,110 L278,110 Q274,110 274,106 Z" fill="#3f48cc"/>
<rect x="208" y="93.8" width="50.8" height="31.7" rx="6" fill="#fff"/>
<rect x="208" y="97.3" width="47.3" height="24.7" rx="4" fill="#3f48cc"/>
<text x="220" y="114.6" font-family="Liberation Sans" font-weight="bold" font-size="13" fill="#fff">STL</text>
<rect x="238" y="131" width="49" height="4.6" fill="#fff"/>
<rect x="238" y="145.6" width="49" height="4.4" fill="#fff"/>
<rect x="238" y="160" width="49" height="4.3" fill="#fff"/>
</svg>

</body></html>
